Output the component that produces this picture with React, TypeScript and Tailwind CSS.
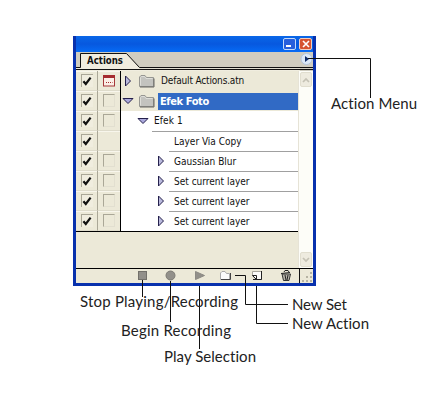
import React from "react";

type Row = { label: string; kind: "set" | "action" | "step"; open?: boolean; arrow?: boolean; dialog?: "on" | "empty"; selected?: boolean; first?: boolean };

const rows: Row[] = [
  { label: "Default Actions.atn", kind: "set", arrow: true, dialog: "on" },
  { label: "Efek Foto", kind: "set", arrow: true, open: true, dialog: "empty", selected: true },
  { label: "Efek 1", kind: "action", arrow: true, open: true, dialog: "empty" },
  { label: "Layer Via Copy", kind: "step", first: true },
  { label: "Gaussian Blur", kind: "step", arrow: true, dialog: "empty" },
  { label: "Set current layer", kind: "step", arrow: true, dialog: "empty" },
  { label: "Set current layer", kind: "step", arrow: true, dialog: "empty" },
  { label: "Set current layer", kind: "step", arrow: true, dialog: "empty" },
];

function Arrow({ open }: { open?: boolean }) {
  return open ? (
    <svg width="12" height="8" viewBox="0 0 12 8" className="shrink-0">
      <path d="M1 1.5H11L6 6.5Z" fill="#aaa8dc" stroke="#24204c" />
    </svg>
  ) : (
    <svg width="8" height="12" viewBox="0 0 8 12" className="shrink-0">
      <path d="M1.5 1V11L6.500 6Z" fill="#b9b9dc" stroke="#24204c" />
    </svg>
  );
}

function Folder() {
  return (
    <svg width="16" height="13" viewBox="0 0 16 13" className="shrink-0">
      <path d="M.5 11.5V2L2 .5H6L7.5 2.5H14.5V11.5Z" fill="#c3c3bf" stroke="#969692" />
      <path d="M1.500 10.5V2.500L2.500 1.500H5.500L7 3.500H13.500" fill="none" stroke="#deded9" />
      <path d="M1 12H15V3.500" fill="none" stroke="#686864" />
    </svg>
  );
}

function CheckBox() {
  return (
    <div className="flex h-[13px] w-3 items-center justify-center border-t border-l border-t-[#aaa797] border-l-[#aaa797] bg-[#f0eddf]">
      <svg width="10" height="10" viewBox="0 0 10 10">
        <path d="M1.400 5.200L3.800 8L8.600 1.600" fill="none" stroke="#111" strokeWidth="2.2" />
      </svg>
    </div>
  );
}

function DialogBox({ state }: { state?: "on" | "empty" }) {
  if (state === "on")
    return (
      <svg width="12" height="12" viewBox="0 0 12 12">
        <rect x=".5" y=".5" width="11" height="10.500" fill="#fbeee6" stroke="#a5383a" />
        <path d="M0 1.500H12" stroke="#a52b2f" strokeWidth="3" />
        <path d="M3 7.500H9.500" stroke="#a52b2f" strokeDasharray="1 1" />
      </svg>
    );
  if (state === "empty")
    return <div className="h-[13px] w-3 border border-t-[#aaa797] border-r-[#e2dfd0] border-b-[#e2dfd0] border-l-[#aaa797]" />;
  return null;
}

function ActionRow({ row }: { row: Row }) {
  return (
    <div className="flex h-5">
      <div className="flex w-[22px] items-center justify-center border-r border-b border-r-[#aaa797] border-b-[#dedbcb] shadow-[inset_0_1px_0_#f8f6ec]">
        <CheckBox />
      </div>
      <div className="flex w-[22px] items-center justify-center border-b border-b-[#dedbcb] shadow-[inset_0_1px_0_#f8f6ec]">
        <DialogBox state={row.dialog} />
      </div>
      <div className={row.kind === "set" ? "flex w-[178px] border-l border-black bg-[#ece9d8]" : "flex w-[178px] border-l border-black bg-white"}>
        {row.kind === "set" && (
          <div className="flex flex-1 items-center">
            <span className="flex w-[18px] justify-center pr-[4px]"><Arrow open={row.open} /></span>
            <Folder />
            <span className="w-[3px]" />
            {row.selected ? (
              <span className="flex h-[17px] flex-1 items-center bg-[#316ac5] pl-[2px] text-[11px] font-bold tracking-[-0.4px] text-white">{row.label}</span>
            ) : (
              <span className="pl-[3px] tracking-[-0.16px]">{row.label}</span>
            )}
          </div>
        )}
        {row.kind === "action" && (
          <div className="flex flex-1 items-center pl-4">
            <Arrow open={row.open} />
            <span className="ml-[5px] tracking-[0.1px]">{row.label}</span>
          </div>
        )}
        {row.kind === "step" && (
          <div className="flex flex-1 items-center pl-[31px]">
            <span className={row.first ? "h-5 w-[17px] border-t border-[#a0a0a0]" : "flex h-5 w-[17px] items-center pl-[5px]"}>{row.arrow && <Arrow />}</span>
            <div className="flex h-5 flex-1 items-center border-t border-[#a0a0a0] pl-[5px]">
              <span>{row.label}</span>
            </div>
          </div>
        )}
      </div>
    </div>
  );
}

function TitleBar() {
  return (
    <div className="flex h-[16px] items-center justify-end gap-[3px] bg-linear-to-b from-[#0a67e8] via-[#0758df] to-[#066bf5] pr-[1px]">
      <div className="flex h-3 w-[13px] items-end rounded-[2px] border border-[#c4dafa] bg-[#275fdc] pb-[2px] pl-[2px]">
        <div className="h-[2px] w-[5px] bg-white" />
      </div>
      <div className="flex h-3 w-[13px] items-center justify-center rounded-[2px] border border-[#f3cdbd] bg-[#d65330]">
        <svg width="8" height="8" viewBox="0 0 8 8"><path d="M1 1L7 7M7 1L1 7" stroke="#fff" strokeWidth="1.6" /></svg>
      </div>
    </div>
  );
}

function TabBar() {
  return (
    <div className="flex h-[19px] justify-between bg-[#d0cdc0]">
      <svg width="224" height="19" viewBox="0 0 224 19">
        <path d="M0 19V16H4.500V1.500H50L64 16.500H225V19Z" fill="#f0eddf" />
        <path d="M0 15.500H4.500V1.500H50.500L63.500 15.500H225" fill="none" stroke="#111" />
        <path d="M0 17.500H225" stroke="#111" />
        <text x="11" y="12" fontSize="10.500" fontWeight="700" textLength="36" lengthAdjust="spacingAndGlyphs" fill="#111">Actions</text>
      </svg>
      <svg width="13" height="19" viewBox="0 0 13 19">
        <circle cx="6.500" cy="7" r="5.500" fill="#dce9f8" stroke="#b3c5dd" />
        <path d="M5 4V10L9 7Z" fill="#102d69" />
        <path d="M0 15.500H13M0 17.500H13" stroke="#111" />
      </svg>
    </div>
  );
}

function ScrollButton({ down }: { down?: boolean }) {
  return (
    <div className="flex h-[15px] w-[12px] items-center justify-center rounded-[2px] border border-[#e1decf] bg-[#eeebdf]">
      <svg width="8" height="6" viewBox="0 0 8 6">
        <path d={down ? "M1 1L4 4L7 1" : "M1 5L4 2L7 5"} fill="none" stroke="#c5c2b5" strokeWidth="1.7" />
      </svg>
    </div>
  );
}

function BottomBar() {
  return (
    <div className="flex h-[15px] border-t border-black bg-[#ece9d8]">
      <svg width="223" height="14" viewBox="0 0 223 14">
        <rect x="62.500" y="2.500" width="8" height="8" fill="#92908a" stroke="#73716b" />
        <circle cx="94.500" cy="6.500" r="4.500" fill="#92908a" stroke="#7c7a74" />
        <path d="M119.500 2.500V10.500L128.500 6.500Z" fill="#92908a" stroke="#8c8a84" />
        <path d="M144.500 10V4L146 2.500H149L150.500 4.500H153.500V10.500H144.500Z" fill="#fafafa" stroke="#aaa" />
        <path d="M145 10.500H154.500V4" fill="none" stroke="#444" />
        <path d="M176.500 2.500H185.500V10.500H180.500L176.500 7Z" fill="#fcfcfa" stroke="#aaa89e" />
        <path d="M185.500 2V10.500H180M176.500 6.500H180.500V10.500L176.500 6.500M177 10.500H180" fill="none" stroke="#222" />
        <path d="M206 5L207.500 11.500H213L214.500 5Z" fill="#b5b2a8" stroke="#333" />
        <path d="M205 4.500L214 3.500M208 3L209 1.500H212L213 3M209 6L210 11M212 6L211 11" fill="none" stroke="#222" />
      </svg>
      <svg width="14" height="14" viewBox="0 0 14 14">
        <path d="M.5 0V14" stroke="#111" />
        <path d="M11 3h2v2h-2zM7 7h2v2H7zM11 7h2v2h-2zM3 11h2v2H3zM7 11h2v2H7zM11 11h2v2h-2z" fill="#b6b3a3" />
      </svg>
    </div>
  );
}

function Callouts() {
  return (
    <svg width="444" height="406" viewBox="0 0 444 406" className="absolute top-0 left-0 font-[Lato,sans-serif] [font-variant-ligatures:none]" fill="#222">
      <path d="M308 58.500H370.500V98M142.500 280V297M170.500 281V322M199.500 286V349M235 275.500H245.500V304.500H288M256.500 286V323.500H288" fill="none" stroke="#111" />
      <g fontSize="15">
        <text x="331" y="108.500" textLength="86">Action Menu</text>
        <text x="80" y="307" textLength="158">Stop Playing/Recording</text>
        <text x="121" y="336" textLength="110">Begin Recording</text>
        <text x="164" y="362" textLength="92">Play Selection</text>
        <text x="292" y="310" textLength="55">New Set</text>
        <text x="292" y="329" textLength="77">New Action</text>
      </g>
    </svg>
  );
}

export default function App() {
  return (
    <main className="relative h-[406px] w-[444px] bg-white pt-[36px] pl-[73px]">
      <section className="flex h-[250px] w-[243px] flex-col border-x-[3px] border-b-[3px] border-[#0831ad] bg-[#ece9d8] font-['DejaVu_Sans_Condensed','DejaVu_Sans',sans-serif] text-[10px] leading-none text-[#111]">
        <TitleBar />
        <TabBar />
        <div className="flex h-[197px]">
          <div className="w-[222px]">
            {rows.map((row, i) => <ActionRow key={i} row={row} />)}
            <div className="h-[37px] border-t border-black" />
          </div>
          <div className="flex flex-1 flex-col items-center justify-between border-l border-[#e6e3d6] bg-[#fdfdf8] py-[1px]">
            <ScrollButton />
            <ScrollButton down />
          </div>
        </div>
        <BottomBar />
      </section>
      <Callouts />
    </main>
  );
}
